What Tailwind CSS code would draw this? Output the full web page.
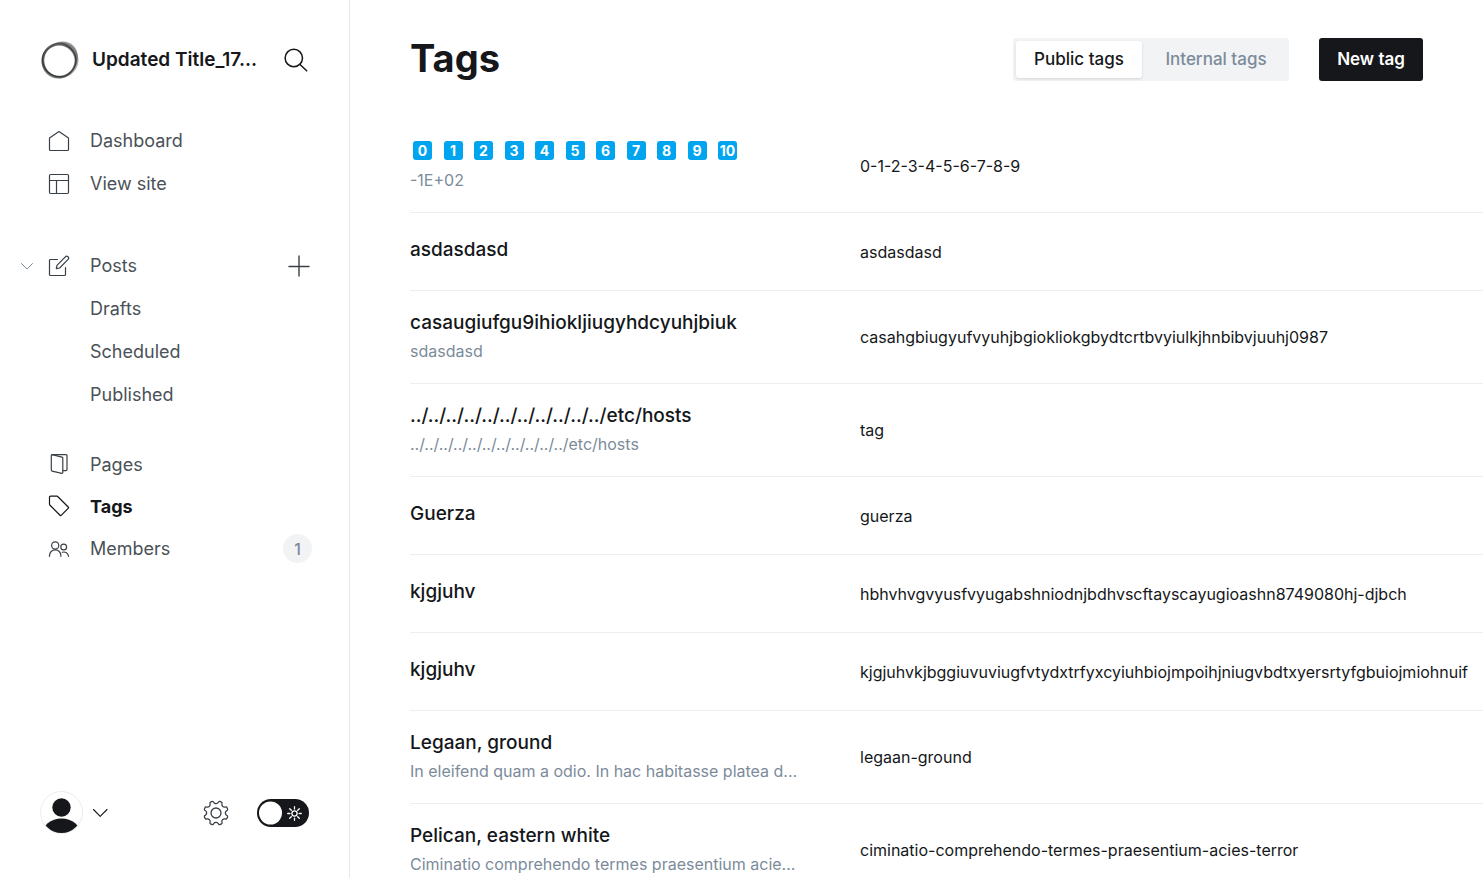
<!DOCTYPE html>
<html lang="en">
<head>
<meta charset="utf-8">
<meta name="viewport" content="width=device-width, initial-scale=1">
<title>Tags</title>
<script src="https://cdn.jsdelivr.net/npm/@tailwindcss/browser@4"></script>
</head>
<body class="flex h-screen overflow-hidden bg-white font-['Inter',sans-serif] text-[#15171a]">

<aside class="flex w-[350px] shrink-0 flex-col border-r border-[#e6e9eb] text-[18px] text-[#4a5157]">
  <header class="flex items-center pl-10 pr-[41px] pt-10">
    <svg class="size-10 shrink-0" viewBox="0 0 40 40" fill="none" aria-hidden="true">
      <g fill="#15171a" fill-rule="evenodd">
        <path fill-opacity=".3" d="M24 1.500C33 2 38.500 9 37.500 17S31 37.500 20 38.500 1 31 1.500 20 13 1 24 1.500ZM19 5C11 5 4 11.500 4 20.500S11 36 19.500 36 34.500 28 35 20.500 28 5 19 5Z"/>
        <path fill-opacity=".35" d="M20 3C31 1 39 12 38.500 21S30 38.500 19.500 38 1 29 1.500 20 9 4.500 20 3ZM19 5.500C11 5.500 3.500 12 3.500 20.500S11 36.500 19.500 36.500 34 29 34.500 21 27 5.500 19 5.500Z"/>
        <path fill-opacity=".35" d="M20 4C30 4 36.500 12 36.500 20S30 38.500 19.500 38.500 1.500 30.500 1.500 21 10 4 20 4ZM19.500 5.500C11 5.500 4 12 4 20.500S11 36 19.500 36 35 29 35 20.500 28 5.500 19.500 5.500Z"/>
      </g>
      <ellipse cx="19.500" cy="20.500" rx="17" ry="16.500" stroke="#15171a" stroke-opacity=".55" transform="rotate(40 20 20)"/>
      <ellipse cx="21" cy="20" rx="17.500" ry="16" stroke="#15171a" stroke-opacity=".35" stroke-width=".800" transform="rotate(-50 20 20)"/>
    </svg>
    <a href="#" class="ml-3 whitespace-nowrap text-[19px] leading-[26px] font-semibold text-[#15171a]">Updated Title_17...</a>
    <button class="ml-auto" aria-label="Search">
      <svg class="size-6" viewBox="0 0 24 24" fill="none" stroke="#15171a" stroke-width="1.500" stroke-linecap="round"><circle cx="9.800" cy="10" r="8.700"/><path d="m16 16.500 6.700 6.200"/></svg>
    </button>
  </header>

  <nav class="pt-[39px]">
    <a href="#" class="flex h-[43px] items-center gap-5 pl-12">
      <svg class="size-[22px]" viewBox="0 0 22 22" fill="none" stroke="#394047" stroke-width="1.200" stroke-linejoin="round"><path d="M1.500 8 11 1.500 20.500 8v11.500a1 1 0 0 1-1 1h-17a1 1 0 0 1-1-1Z"/></svg>
      Dashboard</a>
    <a href="#" class="flex h-[43px] items-center gap-5 pl-12">
      <svg class="size-[22px]" viewBox="0 0 22 22" fill="none" stroke="#394047" stroke-width="1.200"><rect x="1.500" y="1.500" width="19" height="19" rx="1.200"/><path d="M1.500 7.500h19M8.500 7.500v13"/></svg>
      View site</a>

    <div class="mt-[39px] flex h-[43px] items-center pl-5 pr-[39px]">
      <button aria-label="Collapse posts"><svg class="size-[14px]" viewBox="0 0 14 14" fill="none" stroke="#7c8b9a" stroke-width="1" stroke-linecap="round" stroke-linejoin="round"><path d="m1.500 4.500 5.500 5.500 5.500-5.500"/></svg></button>
      <a href="#" class="ml-[14px] flex items-center gap-5">
        <svg class="size-[22px]" viewBox="0 0 22 22" fill="none" stroke="#394047" stroke-width="1.200" stroke-linecap="round" stroke-linejoin="round"><path d="M9.500 4.500h-7a1 1 0 0 0-1 1v14a1 1 0 0 0 1 1h14a1 1 0 0 0 1-1V12.500"/><path d="m8.300 13.700.7-3.300 8.300-8.600a1.830 1.830 0 0 1 2.800 2.600L11.600 13Z"/></svg>
        Posts</a>
      <button class="ml-auto" aria-label="New post"><svg class="size-[22px]" viewBox="0 0 22 22" fill="none" stroke="#394047" stroke-width="1.400" stroke-linecap="round"><path d="M11 1v20M1 11.500h20"/></svg></button>
    </div>
    <a href="#" class="flex h-[43px] items-center pl-[90px]">Drafts</a>
    <a href="#" class="flex h-[43px] items-center pl-[90px]">Scheduled</a>
    <a href="#" class="flex h-[43px] items-center pl-[90px]">Published</a>

    <a href="#" class="mt-[27px] flex h-[42px] items-center gap-5 pl-12">
      <svg class="size-[22px]" viewBox="0 0 22 22" fill="none" stroke="#394047" stroke-width="1.200" stroke-linecap="round" stroke-linejoin="round"><path d="M4 1.700 14 4.200a1 1 0 0 1 .8 1v14.300a.8.8 0 0 1-1 .8L4.100 18.100a1 1 0 0 1-.8-1V2.300a.6.600 0 0 1 .7-.6Z"/><path d="M4 1.600h14a1 1 0 0 1 1 1v14a1 1 0 0 1-1 1h-3"/></svg>
      Pages</a>
    <a href="#" class="flex h-[42px] items-center gap-5 pl-12 font-bold text-[#15171a]" aria-current="page">
      <svg class="size-[22px]" viewBox="0 0 22 22" fill="none" stroke="currentColor" stroke-width="1.200" stroke-linejoin="round"><path d="M1.500 2.200a1 1 0 0 1 1-1H9a1 1 0 0 1 .7.300L20.200 12a1 1 0 0 1 0 1.400l-6.800 6.800a1 1 0 0 1-1.400 0L1.800 10a1 1 0 0 1-.3-.7Z"/></svg>
      Tags</a>
    <a href="#" class="flex h-[43px] items-center gap-5 pl-12 pr-[37px]">
      <svg class="size-[22px]" viewBox="0 0 22 22" fill="none" stroke="#394047" stroke-width="1.200" stroke-linecap="round"><circle cx="7.200" cy="7.500" r="3.600"/><path d="M1.500 18.300v-.8a5.700 5.700 0 0 1 11.400 0v.8"/><circle cx="15.700" cy="9" r="2.900"/><path d="M14.300 14.300a4.600 4.600 0 0 1 6.200 4"/></svg>
      Members
      <span class="ml-auto flex size-[29px] items-center justify-center rounded-full bg-[#f1f3f4] text-[16px] font-medium text-[#7c8b9a]">1</span></a>
  </nav>

  <footer class="mt-auto flex items-center pb-11 pl-10 pr-10">
    <button class="flex items-center gap-[9px]" aria-label="Account">
      <svg class="size-[43px]" viewBox="0 0 43 43"><defs><clipPath id="face"><circle cx="21.500" cy="21.500" r="20.500"/></clipPath></defs><circle cx="21.500" cy="21.500" r="21" fill="#fff" stroke="#e9ecee"/><g clip-path="url(#face)" fill="#15171a"><circle cx="21.500" cy="16.500" r="9.200"/><ellipse cx="21.500" cy="44" rx="19.500" ry="16.500"/></g></svg>
      <svg class="size-4" viewBox="0 0 16 16" fill="none" stroke="#15171a" stroke-width="1.100" stroke-linecap="round" stroke-linejoin="round"><path d="M1.500 4.500 8.200 11.300 15 4.500"/></svg>
    </button>
    <a href="#" class="ml-auto" aria-label="Settings">
      <svg class="size-[26px]" viewBox="0 0 26 26" fill="none" stroke="#394047" stroke-width="1.300" stroke-linecap="round" stroke-linejoin="round">
        <defs><path id="tooth" d="M9.400 4.300C10.500 3.850 10.900 3.600 11 2.400Q11.100.8 12.100.8H13.900Q14.900.8 15 2.400C15.100 3.600 15.500 3.850 16.600 4.300"/></defs>
        <circle cx="13" cy="13" r="5"/>
        <use href="#tooth" transform="rotate(22.500 13 13)"/><use href="#tooth" transform="rotate(67.500 13 13)"/><use href="#tooth" transform="rotate(112.500 13 13)"/><use href="#tooth" transform="rotate(157.500 13 13)"/><use href="#tooth" transform="rotate(202.500 13 13)"/><use href="#tooth" transform="rotate(247.500 13 13)"/><use href="#tooth" transform="rotate(292.500 13 13)"/><use href="#tooth" transform="rotate(337.500 13 13)"/>
      </svg>
    </a>
    <label class="relative ml-7 block h-7 w-[52px]">
      <input type="checkbox" class="block h-7 w-[52px] appearance-none rounded-full bg-[#15171a]" aria-label="Night mode">
      <svg class="pointer-events-none absolute inset-0 size-full" viewBox="0 0 52 28" fill="none" stroke="#fff" stroke-width="1.300" stroke-linecap="round"><circle cx="13.500" cy="14" r="11.500" fill="#fff" stroke="none"/><circle cx="37.500" cy="14.500" r="2.600"/><path d="M37.500 7.700v2.200M37.500 19.100v2.200M30.700 14.500h2.200M42.100 14.500h2.200M32.700 9.700l1.600 1.600M40.700 17.700l1.600 1.600M32.700 19.300l1.600-1.600M40.700 11.300l1.600-1.600"/></svg>
    </label>
  </footer>
</aside>

<main class="min-w-0 flex-1 overflow-hidden pl-[60px]">
  <header class="flex items-start pr-[60px] pb-[39px] pt-[38px]">
    <h1 class="text-[38px] leading-[40px] font-bold">Tags</h1>
    <div class="ml-auto flex h-[43px] items-stretch rounded-[3px] bg-[#f1f3f4] p-[3px] text-[17px] font-medium">
      <button class="w-[126px] rounded-[3px] bg-white shadow">Public tags</button>
      <button class="w-[144px] pl-1 text-[#7c8b9a]">Internal tags</button>
    </div>
    <button class="ml-[30px] h-[43px] w-[104px] rounded-[3px] bg-[#15171a] text-[17px] font-semibold text-white">New tag</button>
  </header>

  <table class="w-full table-fixed border-collapse text-left text-[16px]">
    <colgroup><col class="w-[450px]"><col></colgroup>
    <tbody>
      <tr class="border-b border-[#eceef0]">
        <td class="pt-[18px] pb-[18px] pr-[50px]">
          <div class="flex h-7 w-[330px] items-start justify-between px-[3px] pt-[3px] text-[14px] leading-[19px] font-bold text-white">
            <span class="w-[19px] rounded-[3px] bg-[#00a4ef] text-center">0</span><span class="w-[19px] rounded-[3px] bg-[#00a4ef] text-center">1</span><span class="w-[19px] rounded-[3px] bg-[#00a4ef] text-center">2</span><span class="w-[19px] rounded-[3px] bg-[#00a4ef] text-center">3</span><span class="w-[19px] rounded-[3px] bg-[#00a4ef] text-center">4</span><span class="w-[19px] rounded-[3px] bg-[#00a4ef] text-center">5</span><span class="w-[19px] rounded-[3px] bg-[#00a4ef] text-center">6</span><span class="w-[19px] rounded-[3px] bg-[#00a4ef] text-center">7</span><span class="w-[19px] rounded-[3px] bg-[#00a4ef] text-center">8</span><span class="w-[19px] rounded-[3px] bg-[#00a4ef] text-center">9</span><span class="w-[19px] rounded-[3px] bg-[#00a4ef] text-center">10</span>
          </div>
          <p class="truncate leading-7 text-[#7c8b9a]">-1E+02</p>
        </td>
        <td class="whitespace-nowrap">0-1-2-3-4-5-6-7-8-9</td>
      </tr>
      <tr class="border-b border-[#eceef0]">
        <td class="pt-[23px] pb-[26px] pr-[50px]"><h3 class="truncate text-[19px] leading-7 font-medium">asdasdasd</h3></td>
        <td class="whitespace-nowrap">asdasdasd</td>
      </tr>
      <tr class="border-b border-[#eceef0]">
        <td class="pt-[18px] pb-[18px] pr-[50px]"><h3 class="truncate text-[19px] leading-7 font-medium">casaugiufgu9ihiokljiugyhdcyuhjbiuk</h3><p class="truncate leading-7 text-[#7c8b9a]">sdasdasd</p></td>
        <td class="whitespace-nowrap">casahgbiugyufvyuhjbgiokliokgbydtcrtbvyiulkjhnbibvjuuhj0987</td>
      </tr>
      <tr class="border-b border-[#eceef0]">
        <td class="pt-[18px] pb-[18px] pr-[50px]"><h3 class="truncate text-[19px] leading-7 font-medium">../../../../../../../../../../../etc/hosts</h3><p class="truncate leading-7 text-[#7c8b9a]">../../../../../../../../../../../etc/hosts</p></td>
        <td class="whitespace-nowrap">tag</td>
      </tr>
      <tr class="border-b border-[#eceef0]">
        <td class="pt-[23px] pb-[26px] pr-[50px]"><h3 class="truncate text-[19px] leading-7 font-medium">Guerza</h3></td>
        <td class="whitespace-nowrap">guerza</td>
      </tr>
      <tr class="border-b border-[#eceef0]">
        <td class="pt-[23px] pb-[26px] pr-[50px]"><h3 class="truncate text-[19px] leading-7 font-medium">kjgjuhv</h3></td>
        <td class="whitespace-nowrap">hbhvhvgvyusfvyugabshniodnjbdhvscftayscayugioashn8749080hj-djbch</td>
      </tr>
      <tr class="border-b border-[#eceef0]">
        <td class="pt-[23px] pb-[26px] pr-[50px]"><h3 class="truncate text-[19px] leading-7 font-medium">kjgjuhv</h3></td>
        <td class="whitespace-nowrap">kjgjuhvkjbggiuvuviugfvtydxtrfyxcyiuhbiojmpoihjniugvbdtxyersrtyfgbuiojmiohnuif</td>
      </tr>
      <tr class="border-b border-[#eceef0]">
        <td class="pt-[18px] pb-[18px] pr-[50px]"><h3 class="truncate text-[19px] leading-7 font-medium">Legaan, ground</h3><p class="truncate leading-7 text-[#7c8b9a]">In eleifend quam a odio. In hac habitasse platea d...</p></td>
        <td class="whitespace-nowrap">legaan-ground</td>
      </tr>
      <tr class="border-b border-[#eceef0]">
        <td class="pt-[18px] pb-[18px] pr-[50px]"><h3 class="truncate text-[19px] leading-7 font-medium">Pelican, eastern white</h3><p class="truncate leading-7 text-[#7c8b9a]">Ciminatio comprehendo termes praesentium acie...</p></td>
        <td class="whitespace-nowrap">ciminatio-comprehendo-termes-praesentium-acies-terror</td>
      </tr>
    </tbody>
  </table>
</main>
</body>
</html>
